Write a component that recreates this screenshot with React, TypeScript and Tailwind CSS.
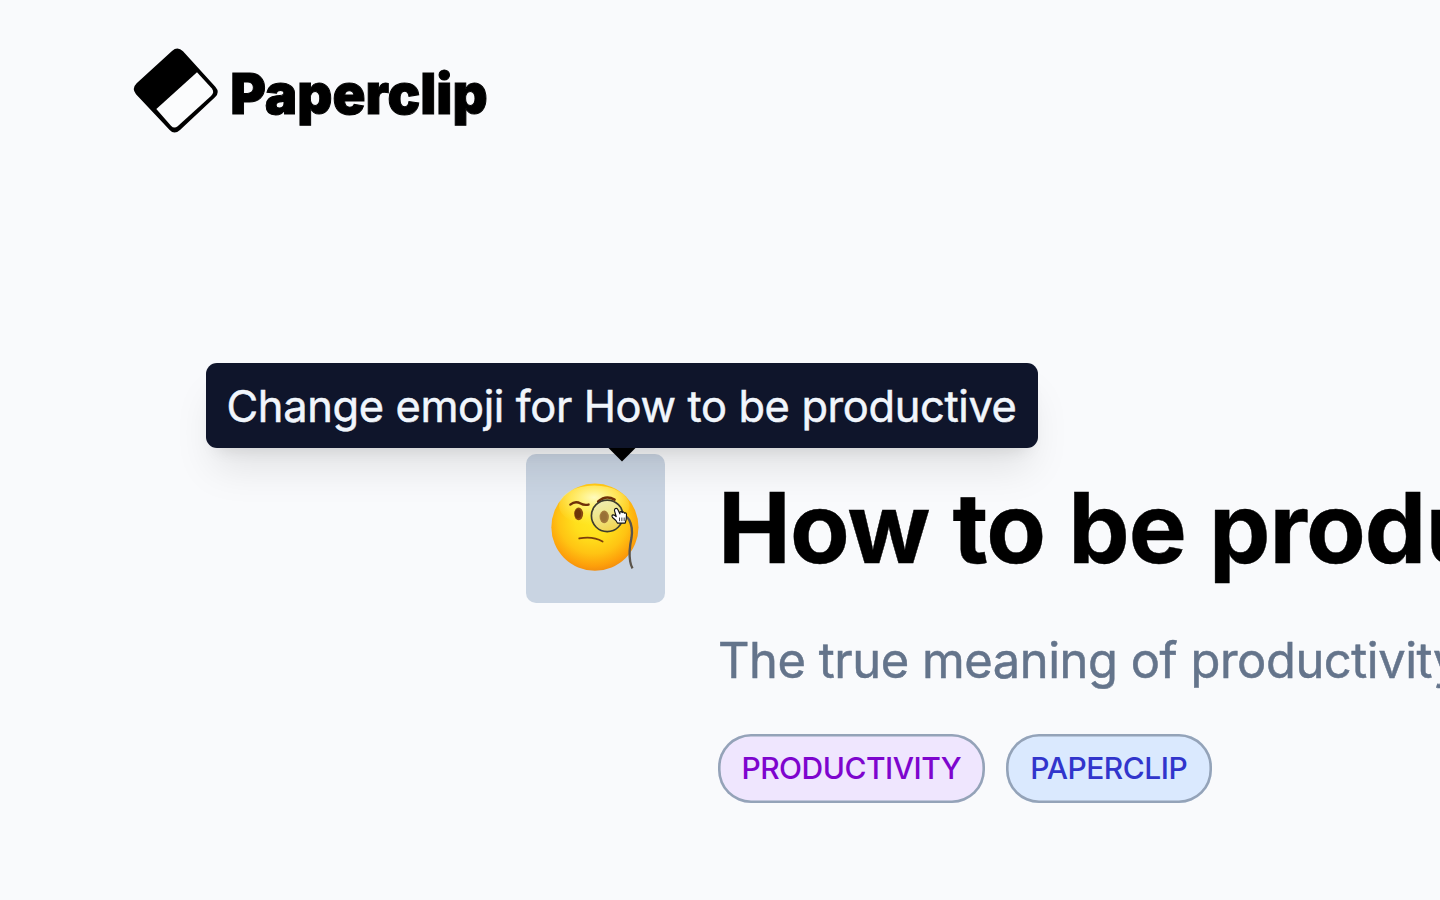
function Logo() {
  return (
    <svg viewBox="0 0 1140 330" className="block h-[110px] w-[380px]" role="img" aria-label="Paperclip">
      <path
        d="M50 145 L156 48 Q173 33 189 49 L286 155 Q301 172 285 187 L180 285 Q163 300 149 285 L48 178 Q34 161 50 145Z"
        fill="#000"
      />
      <path
        d="M231 112 L275 160 Q285 172 273 183 L173 274 Q162 282 153 272 L109 222Z"
        fill="#fbfcfd"
      />
      <text
        x="331"
        y="238"
        textLength="772"
        lengthAdjust="spacingAndGlyphs"
        fontFamily="Inter, sans-serif"
        fontWeight="900"
        fontSize="169"
        stroke="#000"
        strokeWidth="3"
      >
        Paperclip
      </text>
    </svg>
  );
}

function MonocleEmoji() {
  return (
    <svg viewBox="18 41 416 448" className="block h-full w-full" aria-hidden="true">
      <defs>
        <radialGradient id="face" cx="0.48" cy="0.4" r="0.62">
          <stop offset="0" stopColor="#ffe923" />
          <stop offset="0.35" stopColor="#ffdf1c" />
          <stop offset="0.65" stopColor="#ffc413" />
          <stop offset="0.88" stopColor="#fd9f0a" />
          <stop offset="1" stopColor="#f08a10" />
        </radialGradient>
        <radialGradient id="shine" cx="0.5" cy="0.3" r="0.7">
          <stop offset="0" stopColor="#fffcc8" stopOpacity="0.95" />
          <stop offset="0.5" stopColor="#fff67c" stopOpacity="0.6" />
          <stop offset="1" stopColor="#ffec40" stopOpacity="0" />
        </radialGradient>
        <linearGradient id="lens" x1="0" y1="0" x2="0.3" y2="1">
          <stop offset="0" stopColor="#efeeb8" />
          <stop offset="0.5" stopColor="#efe88e" />
          <stop offset="1" stopColor="#f1d556" />
        </linearGradient>
      </defs>
      <circle cx="225" cy="261" r="131" fill="url(#face)" />
      <ellipse cx="223" cy="196" rx="106" ry="60" fill="url(#shine)" />
      <ellipse cx="176" cy="221" rx="13.5" ry="19" fill="#8a4a10" />
      <ellipse cx="174" cy="221" rx="9" ry="14" fill="#6a3508" />
      <path d="M151 193 Q166 181 182 190 Q192 196 206 193" fill="none" stroke="#6f3008" strokeWidth="7" strokeLinecap="round" />
      <path d="M235 184 Q258 163 284 178" fill="none" stroke="#6f3008" strokeWidth="8" strokeLinecap="round" />
      <path d="M178 295 Q218 287 248 304" fill="none" stroke="#7c3e0b" strokeWidth="5.5" strokeLinecap="round" />
      <path d="M308 228 Q321 227 328 239 Q340 261 335 293 Q326 335 331 364 Q333 376 338 385" fill="none" stroke="#5b554c" strokeWidth="7" />
      <circle cx="262" cy="227" r="47.5" fill="url(#lens)" stroke="#3e3d2d" strokeWidth="5" />
      <ellipse cx="253" cy="230" rx="14" ry="19" fill="#a47a3c" />
      <ellipse cx="252" cy="230" rx="9" ry="14" fill="#987036" />
      <path
        d="M287 205 Q292 203 295 210 L300 221 L300 216 Q304 212 307 217 Q311 213 314 219 Q319 216 320 223 L319 238 L316 249 L293 249 L288 241 L278 232 Q274 226 279 224 Q284 223 289 229 L284 212 Q283 207 287 205Z"
        fill="#fff"
        stroke="#111"
        strokeWidth="3.4"
        strokeLinejoin="round"
      />
      <path d="M299 232 V243 M306 232 V243 M313 232 V243" stroke="#111" strokeWidth="2.4" />
    </svg>
  );
}

function Tooltip({ text }: { text: string }) {
  return (
    <div
      role="tooltip"
      className="absolute bottom-[155px] left-[-320.5px] flex h-[85px] w-[832.5px] items-center rounded-[11px] bg-[#0f152b] pl-[21px] pt-[3px] text-[43.4px] tracking-[-0.36px] whitespace-nowrap text-[#f1f6fc] [-webkit-text-stroke:0.5px_#f1f6fc] shadow-[0_27px_40px_-8px_rgba(0,0,0,0.1),0_11px_16px_-11px_rgba(0,0,0,0.12)]"
    >
      {text}
      <svg viewBox="0 0 28 14" className="absolute top-full left-[402.5px] h-[14px] w-[28px]" aria-hidden="true">
        <path d="M0.5 0 H27.5 L14 13.5Z" fill="#000" />
      </svg>
    </div>
  );
}

export default function App() {
  return (
    <div className="h-[900px] w-[1440px] overflow-hidden bg-[#f9fafc] font-['Inter',sans-serif] [font-optical-sizing:none]">
      <header className="pt-[35px] pl-[120px]">
        <Logo />
      </header>
      <main className="flex items-start gap-[53.5px] pt-[309px] pl-[526px]">
        <button className="relative block h-[149px] w-[138.5px] shrink-0 rounded-[10px] bg-[#c9d4e2] text-left" aria-label="Change emoji">
          <Tooltip text="Change emoji for How to be productive" />
          <span className="relative block h-full w-full">
            <MonocleEmoji />
          </span>
        </button>
        <section className="shrink-0 whitespace-nowrap">
          <h1 className="pt-[14px] text-[97.5px] leading-[120px] font-bold tracking-[-0.9px] text-black [word-spacing:0.8px] [-webkit-text-stroke:0.4px_#000]">
            How to be productive
          </h1>
          <p className="pt-[43px] text-[48.8px] leading-[60px] tracking-[-0.43px] text-[#64748b] [-webkit-text-stroke:0.5px_#64748b]">
            The true meaning of productivity
          </p>
          <div className="flex gap-[21.5px] pt-[43px]">
            <span className="flex h-[69px] w-[266.5px] items-center justify-center rounded-[33px] bg-[#efe6fe] text-[30px] font-medium tracking-[-0.5px] text-[#7e05ce] shadow-[inset_0_0_0_2.6px_#94a3b8]">
              PRODUCTIVITY
            </span>
            <span className="flex h-[69px] w-[205.5px] items-center justify-center rounded-[33px] bg-[#dae9fe] text-[30px] font-medium tracking-[-0.5px] text-[#3135cc] shadow-[inset_0_0_0_2.6px_#94a3b8]">
              PAPERCLIP
            </span>
          </div>
        </section>
      </main>
    </div>
  );
}
